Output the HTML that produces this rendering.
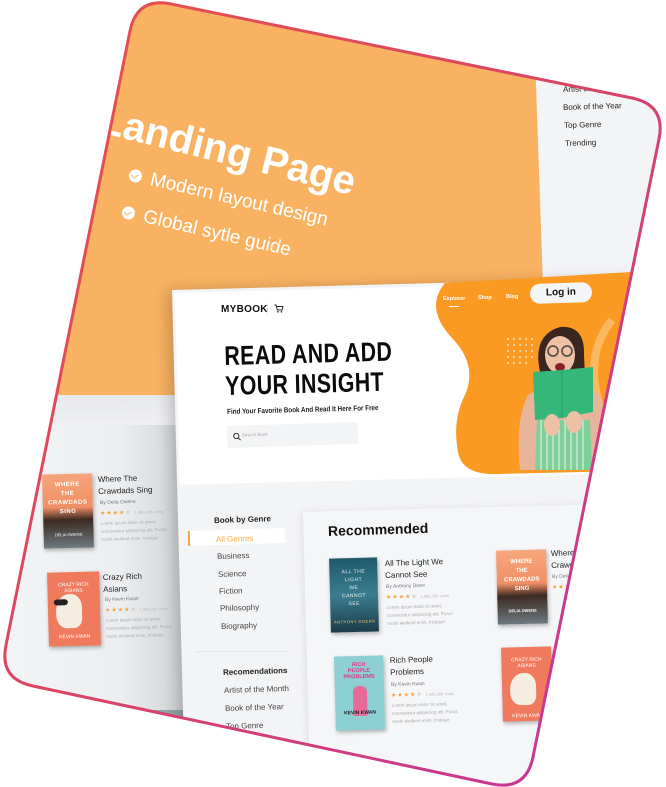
<!DOCTYPE html>
<html><head><meta charset="utf-8"><style>
*{margin:0;padding:0;box-sizing:border-box}
body{width:666px;height:787px;background:#fff;position:relative;overflow:hidden;font-family:"Liberation Sans",sans-serif}
#clip{position:absolute;left:0;top:0;width:666px;height:787px;overflow:hidden;
clip-path:path('M171,4 L632,98 Q666,105 659,139 L533,757 Q526,791 492,784 L33,686 Q-1,679 6,645 L130,31 Q137,-3 171,4 Z');background:#f2f3f5}
.a{position:absolute;white-space:nowrap}
.r{transform:rotate(-1.8deg);transform-origin:0 50%}
.t{font-size:8px;color:#222}
.s{font-size:5px;color:#777}
.l{font-size:4.5px;color:#aaa;line-height:8px}
.st{font-size:6px;color:#f7a13a;letter-spacing:1px}
.ck{display:inline-block;width:13px;height:13px;border-radius:50%;background:#fff;margin-right:9px;vertical-align:-1px;position:relative}
.ck:after{content:"";position:absolute;left:4px;top:3px;width:3px;height:5px;border:solid #f9b262;border-width:0 1.5px 1.5px 0;transform:rotate(45deg)}
</style></head><body>
<div id="clip">
<div class="a" style="left:0;top:0;width:666px;height:400px;background:#f9b262;clip-path:polygon(0 0,533px 0,547px 400px,0 400px)"></div>
<div class="a" style="left:0;top:0;width:666px;height:300px;background:#f3f4f6;clip-path:polygon(533px 0,666px 0,666px 300px,545px 300px)"></div>
<div class="a t r" style="left:563px;top:85px;font-size:8px">Artist of the Month</div>
<div class="a t r" style="left:563px;top:103px;font-size:8px">Book of the Year</div>
<div class="a t r" style="left:564px;top:121px;font-size:8px">Top Genre</div>
<div class="a t r" style="left:565px;top:139px;font-size:8px">Trending</div>
<div class="a" style="left:96px;top:104px;font-size:40px;font-weight:bold;color:#fff;line-height:40px;transform:rotate(14deg);transform-origin:22px 36px">Landing Page</div>
<div class="a" style="left:129px;top:165px;font-size:19px;color:#fff;line-height:20px;transform:rotate(13deg);transform-origin:0 50%"><span class="ck"></span>Modern layout design</div>
<div class="a" style="left:122px;top:202px;font-size:19px;color:#fff;line-height:20px;transform:rotate(13deg);transform-origin:0 50%"><span class="ck"></span>Global sytle guide</div>

<div class="a" style="left:0;top:400px;width:200px;height:400px;background:linear-gradient(90deg,#f3f4f6 0,#eceef0 60%,#c9cbce 100%)"></div>
<div class="a" style="left:0;top:395px;width:190px;height:30px;background:linear-gradient(180deg,#e8e9eb,#eff0f2)"></div>
<div class="a" style="left:43px;top:474px;width:50px;height:74px;background:linear-gradient(180deg,#f6a47a 0,#f08f66 45%,#3c2a22 62%,#6d7a80 100%);box-shadow:1px 2px 4px rgba(0,0,0,.3);transform:rotate(-1.5deg)"><div style="color:#fff;font-size:6px;font-weight:bold;text-align:center;line-height:9px;padding-top:7px;letter-spacing:.5px">WHERE<br>THE<br>CRAWDADS<br>SING</div><div style="color:#fff;font-size:4px;text-align:center;margin-top:15px">DELIA OWENS</div></div>
<div class="a t r" style="left:98px;top:474px;font-size:8px;line-height:12px">Where The<br>Crawdads Sing</div>
<div class="a s r" style="left:100px;top:500px">By Delia Owens</div>
<div class="a st r" style="left:100px;top:510px">★★★★<span style="color:#ccc">★</span> <span style="color:#bbb;font-size:4px;letter-spacing:0">1,988,288 votes</span></div>
<div class="a l r" style="left:101px;top:520px">Lorem ipsum dolor sit amet,<br>consectetur adipiscing elit. Purus<br>morbi eleifend enim, tristique</div>
<div class="a" style="left:48px;top:572px;width:52px;height:74px;background:#f07a5e;box-shadow:1px 2px 4px rgba(0,0,0,.3);transform:rotate(-1.5deg)"><div style="color:#fff;font-size:5px;text-align:center;line-height:6px;padding-top:10px">CRAZY RICH<br>ASIANS</div><div style="position:absolute;left:8px;top:22px;width:26px;height:34px;background:#f4ede0;border-radius:50% 40% 30% 40%"></div><div style="position:absolute;left:6px;top:27px;width:14px;height:6px;background:#222;border-radius:3px"></div><div style="position:absolute;left:0;width:100%;top:62px;color:#fff;font-size:5px;text-align:center">KEVIN KWAN</div></div>
<div class="a t r" style="left:103px;top:572px;font-size:8px;line-height:12px">Crazy Rich<br>Asians</div>
<div class="a s r" style="left:105px;top:597px">By Kevin Kwan</div>
<div class="a st r" style="left:105px;top:607px">★★★★<span style="color:#ccc">★</span> <span style="color:#bbb;font-size:4px;letter-spacing:0">1,988,288 votes</span></div>
<div class="a l r" style="left:106px;top:617px">Lorem ipsum dolor sit amet,<br>consectetur adipiscing elit. Purus<br>morbi eleifend enim, tristique</div>
<div class="a" style="left:150px;top:710px;width:45px;height:30px;background:#8fa4a8"></div>

<div class="a" style="left:172px;top:290px;width:500px;height:520px;box-shadow:-6px 0 14px rgba(0,0,0,.18);background:#f3f4f6;transform:rotate(-1.5deg);transform-origin:0 0"></div>
<div class="a" style="left:175px;top:293px;width:500px;height:192px;background:#fff;transform:rotate(-1.5deg);transform-origin:0 0"></div>
<svg class="a" style="left:0;top:0" width="666" height="787"><path d="M445,283 L666,270 L666,470 L500,474 Q462,476 458,452 Q452,420 465,395 Q478,365 452,338 Q424,308 445,283 Z" fill="#fb9a22"/>
<path d="M612,320 Q580,360 605,420" stroke="#fcb860" stroke-width="8" fill="none"/>
<g fill="#fde2c2"><circle cx="508" cy="339" r="1"/><circle cx="514" cy="339" r="1"/><circle cx="520" cy="339" r="1"/><circle cx="526" cy="339" r="1"/><circle cx="532" cy="339" r="1"/><circle cx="508" cy="345" r="1"/><circle cx="514" cy="345" r="1"/><circle cx="520" cy="345" r="1"/><circle cx="526" cy="345" r="1"/><circle cx="532" cy="345" r="1"/><circle cx="508" cy="351" r="1"/><circle cx="514" cy="351" r="1"/><circle cx="520" cy="351" r="1"/><circle cx="526" cy="351" r="1"/><circle cx="532" cy="351" r="1"/><circle cx="508" cy="357" r="1"/><circle cx="514" cy="357" r="1"/><circle cx="520" cy="357" r="1"/><circle cx="526" cy="357" r="1"/><circle cx="532" cy="357" r="1"/><circle cx="508" cy="363" r="1"/><circle cx="514" cy="363" r="1"/><circle cx="520" cy="363" r="1"/><circle cx="526" cy="363" r="1"/></g>
<path d="M540,372 Q532,335 560,327 Q585,325 584,355 L586,395 L538,395 Z" fill="#3a2620"/>
<path d="M520,470 Q515,420 528,395 Q545,385 560,386 Q590,385 600,395 Q608,420 600,470 Z" fill="#e8b49a"/>
<path d="M535,470 L537,420 L590,420 L592,470 Z" fill="#7fcf9a"/>
<g stroke="#e8f7ec" stroke-width="1"><path d="M541,420V470M547,420V470M553,420V470M559,420V470M565,420V470M571,420V470M577,420V470M583,420V470"/></g>
<ellipse cx="560" cy="355" rx="15" ry="19" fill="#f0c0a4"/>
<circle cx="553" cy="351" r="5" fill="none" stroke="#444" stroke-width="1.5"/><circle cx="567" cy="351" r="5" fill="none" stroke="#444" stroke-width="1.5"/>
<ellipse cx="560" cy="367" rx="5" ry="4" fill="#8b1e2a"/>
<path d="M533,372 L562,370 L593,367 L593,412 L562,418 L535,420 Z" fill="#35b77a"/>
<path d="M562,370 L562,418" stroke="#2a9864" stroke-width="1"/>
<ellipse cx="552" cy="425" rx="8" ry="11" fill="#eec0a6"/><ellipse cx="574" cy="422" rx="8" ry="11" fill="#eec0a6"/>
</svg>
<div class="a" style="left:221px;top:304px;font-size:10px;font-weight:bold;color:#111;letter-spacing:.3px">MYBOOK</div>
<div class="a" style="left:267px;top:303px;width:1px;height:12px;background:#e4e4e4"></div>
<svg class="a" style="left:274px;top:304px" width="10" height="9"><path d="M0.5,1H2L3.3,6H8L9,2.5H2.5" fill="none" stroke="#222" stroke-width="0.9"/><circle cx="4" cy="7.8" r=".8" fill="#222"/><circle cx="7.5" cy="7.8" r=".8" fill="#222"/></svg>
<div class="a" style="left:443px;top:296px;font-size:5.5px;color:#fff;font-weight:bold">Explorer</div>
<div class="a" style="left:449px;top:306px;width:10px;height:1px;background:#fff"></div>
<div class="a" style="left:478px;top:295px;font-size:5.5px;color:#fff;font-weight:bold">Shop</div>
<div class="a" style="left:506px;top:294px;font-size:5.5px;color:#fff;font-weight:bold">Blog</div>
<div class="a r" style="left:530px;top:284px;width:62px;height:20px;border-radius:10px;background:#f5f5f7;font-size:10px;font-weight:bold;color:#111;text-align:center;line-height:20px">Log in</div>
<div class="a r" style="left:224px;top:341px;font-size:27px;font-weight:900;color:#0b0b0b;line-height:30px;transform:rotate(-1.5deg) scaleX(.79);transform-origin:0 0;letter-spacing:.5px">READ AND ADD<br>YOUR INSIGHT</div>
<div class="a r" style="left:227px;top:407px;font-size:7.4px;color:#222;font-weight:bold;transform:rotate(-1.5deg) scaleX(.85);transform-origin:0 0">Find Your Favorite Book And Read It Here For Free</div>
<div class="a r" style="left:227px;top:426px;width:131px;height:22px;background:#f3f4f6"><svg style="position:absolute;left:6px;top:7px" width="8" height="8"><circle cx="3.3" cy="3.3" r="2.6" fill="none" stroke="#333" stroke-width="1"/><path d="M5.2,5.2L7.5,7.5" stroke="#333" stroke-width="1"/></svg><span style="position:absolute;left:15px;top:7px;font-size:4.5px;color:#aaa">Search Book</span></div>

<div class="a t r" style="left:214px;top:516px;font-weight:bold;font-size:8px">Book by Genre</div>
<div class="a r" style="left:188px;top:531px;width:97px;height:15px;background:#fff;border-left:2px solid #f9a43f"></div>
<div class="a r" style="left:216px;top:535px;font-size:8px;color:#f9a43f">All Genres</div>
<div class="a t r" style="left:217px;top:552px;color:#444">Business</div>
<div class="a t r" style="left:218px;top:570px;color:#444">Science</div>
<div class="a t r" style="left:219px;top:587px;color:#444">Fiction</div>
<div class="a t r" style="left:220px;top:604px;color:#444">Philosophy</div>
<div class="a t r" style="left:221px;top:622px;color:#444">Biography</div>
<div class="a" style="left:195px;top:651px;width:95px;height:1px;background:#e6e7e9"></div>
<div class="a t r" style="left:223px;top:668px;font-weight:bold">Recomendations</div>
<div class="a t r" style="left:224px;top:686px;color:#444">Artist of the Month</div>
<div class="a t r" style="left:225px;top:704px;color:#444">Book of the Year</div>
<div class="a t r" style="left:226px;top:722px;color:#444">Top Genre</div>

<div class="a" style="left:303px;top:512px;width:400px;height:300px;background:#f5f6f8;box-shadow:-2px 0 8px rgba(0,0,0,.08);transform:rotate(-1.5deg);transform-origin:0 0"></div>
<div class="a r" style="left:328px;top:523px;font-size:14px;font-weight:bold;color:#111">Recommended</div>
<div class="a" style="left:330px;top:558px;width:48px;height:74px;background:linear-gradient(180deg,#1f5a6b,#3b7d8f 50%,#1c3b4a);box-shadow:1px 2px 4px rgba(0,0,0,.3);transform:rotate(-1.5deg);color:#e8f0f0;font-size:5px;text-align:center;line-height:8px;padding-top:10px;letter-spacing:.5px">ALL THE<br>LIGHT<br>WE<br>CANNOT<br>SEE<div style="color:#e9c26a;font-size:4px;margin-top:10px">ANTHONY DOERR</div></div>
<div class="a t r" style="left:385px;top:558px;line-height:12px">All The Light We<br>Cannot See</div>
<div class="a s r" style="left:386px;top:584px">By Anthony Doerr</div>
<div class="a st r" style="left:386px;top:594px">★★★★<span style="color:#ccc">★</span> <span style="color:#bbb;font-size:4px;letter-spacing:0">1,988,288 votes</span></div>
<div class="a l r" style="left:387px;top:604px">Lorem ipsum dolor sit amet,<br>consectetur adipiscing elit. Purus<br>morbi eleifend enim, tristique</div>
<div class="a" style="left:335px;top:656px;width:49px;height:74px;background:#8dcfd2;box-shadow:1px 2px 4px rgba(0,0,0,.3);transform:rotate(-1.5deg);color:#e0348a;font-size:5.5px;font-weight:bold;text-align:center;line-height:6px;padding-top:6px">RICH<br>PEOPLE<br>PROBLEMS<div style="margin:6px auto 0;width:14px;height:30px;background:#e86a9a;border-radius:6px 6px 0 0"></div><div style="color:#222;font-size:5px;margin-top:-6px">KEVIN KWAN</div></div>
<div class="a t r" style="left:390px;top:655px;line-height:12px">Rich People<br>Problems</div>
<div class="a s r" style="left:391px;top:682px">By Kevin Kwan</div>
<div class="a st r" style="left:391px;top:692px">★★★★<span style="color:#ccc">★</span> <span style="color:#bbb;font-size:4px;letter-spacing:0">1,988,288 votes</span></div>
<div class="a l r" style="left:392px;top:702px">Lorem ipsum dolor sit amet,<br>consectetur adipiscing elit. Purus<br>morbi eleifend enim, tristique</div>
<div class="a" style="left:497px;top:550px;width:50px;height:74px;background:linear-gradient(180deg,#f8a77c 0,#f08f66 45%,#3c2a22 62%,#6d7a80 100%);box-shadow:1px 2px 4px rgba(0,0,0,.3);transform:rotate(-1.5deg);color:#fff;font-size:6px;font-weight:bold;text-align:center;line-height:9px;padding-top:8px">WHERE<br>THE<br>CRAWDADS<br>SING<div style="font-size:4px;margin-top:12px">DELIA OWENS</div></div>
<div class="a t r" style="left:551px;top:548px;line-height:12px">Where The<br>Crawdads Sing</div>
<div class="a s r" style="left:552px;top:574px">By Delia Owens</div>
<div class="a st r" style="left:552px;top:584px">★★★★</div>
<div class="a" style="left:502px;top:647px;width:50px;height:74px;background:#f07a5e;box-shadow:1px 2px 4px rgba(0,0,0,.3);transform:rotate(-1.5deg);color:#fff;font-size:5px;text-align:center;line-height:6px;padding-top:10px">CRAZY RICH<br>ASIANS<div style="margin:4px 0 0 8px;width:26px;height:32px;background:#f4ede0;border-radius:50% 40% 30% 40%"></div><div style="margin-top:8px">KEVIN KWAN</div></div>
</div>
<svg class="a" style="left:0;top:0" width="666" height="787"><defs><linearGradient id="g" x1="0" y1="0" x2="1" y2="1"><stop offset="0" stop-color="#e8514a"/><stop offset=".5" stop-color="#d94466"/><stop offset="1" stop-color="#c233a0"/></linearGradient></defs>
<path d="M171,4 L632,98 Q666,105 659,139 L533,757 Q526,791 492,784 L33,686 Q-1,679 6,645 L130,31 Q137,-3 171,4 Z" fill="none" stroke="url(#g)" stroke-width="3"/></svg>
</body></html>
